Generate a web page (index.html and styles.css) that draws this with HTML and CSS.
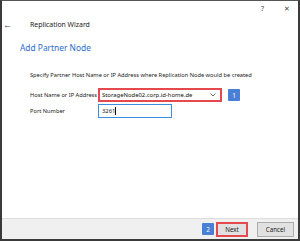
FILE: index.html
```html
<!DOCTYPE html>
<html lang="en">
<head>
    <meta charset="UTF-8">
    <title>Replication Wizard</title>
    <link rel="stylesheet" href="styles.css">
</head>
<body>

<div class="window">
    <div class="caption">
        <span class="cap-btn">?</span>
        <span class="cap-btn close">&#x2715;</span>
    </div>

    <div class="header">
        <span class="back">&#x2190;</span>
        <span class="title">Replication Wizard</span>
    </div>

    <div class="main">
        <h2>Add Partner Node</h2>
        <p class="intro">Specify Partner Host Name or IP Address where Replication Node would be created</p>

        <div class="row">
            <label class="lbl">Host Name or IP Address</label>
            <div class="combo">
                <span>StorageNode02.corp.id-home.de</span>
                <svg class="chev" width="6" height="4" viewBox="0 0 6 4"><path d="M0.5 0.5 L3 3 L5.5 0.5" fill="none" stroke="#555" stroke-width="0.9"/></svg>
            </div>
            <span class="badge">1</span>
        </div>

        <div class="row">
            <label class="lbl">Port Number</label>
            <div class="field">3261<span class="caret"></span></div>
        </div>
    </div>

    <div class="footer">
        <span class="badge">2</span>
        <button class="btn next">Next</button>
        <button class="btn cancel">Cancel</button>
    </div>
</div>

</body>
</html>
```

FILE: styles.css
```css
body {
    margin: 0;
    font-family: 'Noto Sans', 'Open Sans', sans-serif;
    color: #222;
}
.window {
    width: 300px;
    height: 241px;
    box-sizing: border-box;
    border: 2px solid #3a3a3a;
    border-top: 1px solid #555;
    background-color: #ffffff;
    display: flex;
    flex-direction: column;
}
.caption {
    height: 14px;
    display: flex;
    justify-content: flex-end;
    align-items: center;
    gap: 20px;
    padding-right: 8px;
}
.cap-btn {
    font-size: 7px;
    color: #444;
}
.header {
    height: 18px;
    display: flex;
    align-items: center;
    padding-left: 1px;
}
.back {
    font-size: 9px;
    width: 27px;
    color: #444;
}
.title {
    font-size: 6.9px;
    color: #222;
}
.main {
    flex: 1;
    padding: 9px 0 0 18px;
}
h2 {
    margin: 0;
    font-size: 8.4px;
    font-weight: normal;
    color: #2b6cc9;
}
.intro {
    margin: 18px 0 9px 10px;
    font-size: 5.7px;
    white-space: nowrap;
}
.row {
    display: flex;
    align-items: center;
    margin-left: 10px;
    margin-bottom: 2px;
    white-space: nowrap;
}
.lbl {
    width: 68px;
    font-size: 5.7px;
}
.combo {
    width: 124px;
    height: 14px;
    box-sizing: border-box;
    border: 2px solid #e5484d;
    display: flex;
    align-items: center;
    justify-content: space-between;
    padding: 0 4px 0 2px;
    font-size: 5.9px;
    color: #111;
}
.chev {
    display: block;
}
.field {
    width: 74px;
    height: 14px;
    box-sizing: border-box;
    border: 1px solid #3c8fe0;
    display: flex;
    align-items: center;
    padding-left: 3px;
    font-size: 5.9px;
}
.caret {
    width: 1px;
    height: 8px;
    background-color: #111;
}
.badge {
    width: 12px;
    height: 12px;
    margin-left: 6px;
    background-color: #4a7fd6;
    color: #ffffff;
    font-size: 6.5px;
    display: flex;
    align-items: center;
    justify-content: center;
    border-radius: 1px;
}
.footer {
    height: 20px;
    background-color: #f0f0f0;
    border-top: 1px solid #dcdcdc;
    display: flex;
    align-items: center;
    justify-content: flex-end;
    padding-right: 4px;
}
.footer .badge {
    margin-left: 0;
    margin-right: 2px;
}
.btn {
    height: 15px;
    padding: 0;
    font-family: inherit;
    font-size: 6.2px;
    color: #222;
    background-color: #e1e1e1;
    border: 1px solid #adadad;
}
.next {
    width: 32px;
    border: 2px solid #e5484d;
}
.cancel {
    width: 37px;
    margin-left: 9px;
}
```
